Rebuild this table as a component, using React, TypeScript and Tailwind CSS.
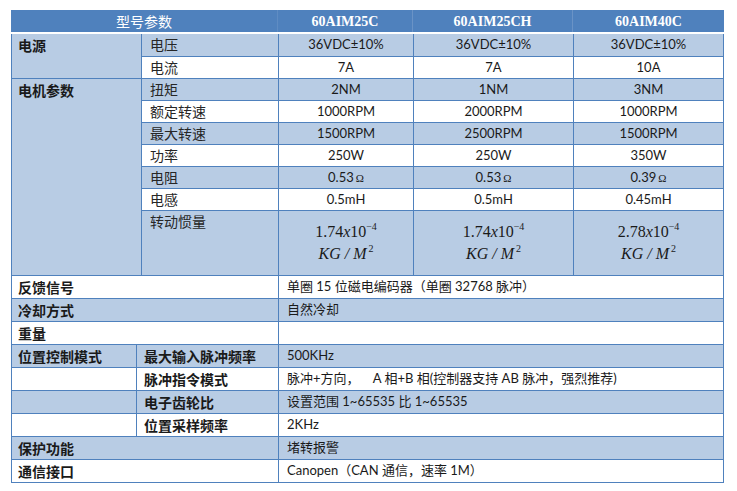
import type { ReactNode } from "react";

const BLUE = "bg-[#b8cce4]";
const WHITE = "bg-white";

type UpperRow = {
  group?: string;
  span?: "row-span-2" | "row-span-7";
  label: string;
  vals?: string[];
  ohm?: string[];
  inertia?: string[];
};

const upper: UpperRow[] = [
  { group: "电源", span: "row-span-2", label: "电压", vals: ["36VDC±10%", "36VDC±10%", "36VDC±10%"] },
  { label: "电流", vals: ["7A", "7A", "10A"] },
  { group: "电机参数", span: "row-span-7", label: "扭矩", vals: ["2NM", "1NM", "3NM"] },
  { label: "额定转速", vals: ["1000RPM", "2000RPM", "1000RPM"] },
  { label: "最大转速", vals: ["1500RPM", "2500RPM", "1500RPM"] },
  { label: "功率", vals: ["250W", "250W", "350W"] },
  { label: "电阻", ohm: ["0.53", "0.53", "0.39"] },
  { label: "电感", vals: ["0.5mH", "0.5mH", "0.45mH"] },
  { label: "转动惯量", inertia: ["1.74", "1.74", "2.78"] },
];

type LowerRow = { label: string; sub?: string; value: string };

const lower: LowerRow[] = [
  { label: "反馈信号", value: "单圈 15 位磁电编码器（单圈 32768 脉冲）" },
  { label: "冷却方式", value: "自然冷却" },
  { label: "重量", value: "" },
  { label: "位置控制模式", sub: "最大输入脉冲频率", value: "500KHz" },
  { label: "", sub: "脉冲指令模式", value: "脉冲+方向，    A 相+B 相(控制器支持 AB 脉冲，强烈推荐)" },
  { label: "", sub: "电子齿轮比", value: "设置范围 1~65535 比 1~65535" },
  { label: "", sub: "位置采样频率", value: "2KHz" },
  { label: "保护功能", value: "堵转报警" },
  { label: "通信接口", value: "Canopen（CAN 通信，速率 1M）" },
];

function Inertia({ n }: { n: string }) {
  return (
    <div className="flex flex-col items-center font-['Liberation_Serif',serif] text-[16px] leading-[22px] text-[#1a1a1a]">
      <span>
        {n}
        <i>x</i>10<sup className="relative -top-[7px] text-[10px] align-baseline">−4</sup>
      </span>
      <span className="italic">
        KG / M<sup className="relative -top-[7px] ml-[2px] text-[10px] not-italic align-baseline">2</sup>
      </span>
    </div>
  );
}

function Value({ children, bg }: { children: ReactNode; bg: string }) {
  return <div className={`flex items-center justify-center ${bg}`}>{children}</div>;
}

export default function App() {
  return (
    <div className="min-h-[491px] bg-white pl-[11px] pt-[10px] font-['Lato','Noto_Sans_CJK_SC',sans-serif] text-[13px] text-[#1a1a1a]">
      <div className="w-[713px]">
        {/* 表头 */}
        <div className="flex h-[22px] bg-[#4f81bd] text-white">
          <div className="flex w-[267px] items-center justify-center border-r border-[#5f8cc3] font-['Noto_Sans_CJK_SC',sans-serif] text-[14px]">
            型号参数
          </div>
          {["60AIM25C", "60AIM25CH", "60AIM40C"].map((m, i) => (
            <div
              key={m}
              className={`flex items-center justify-center font-['Liberation_Serif',serif] text-[14px] font-bold ${
                i === 0 ? "w-[135px] border-r border-[#6a93c6]" : i === 1 ? "w-[160px] border-r border-[#6a93c6]" : "flex-1"
              }`}
            >
              {m}
            </div>
          ))}
        </div>
        <div className="h-[2px] bg-white" />

        <div className="flex flex-col gap-px border border-t-0 border-[#4f81bd] bg-[#4f81bd]">
          {/* 电气/电机参数 */}
          <div className="grid grid-cols-[129px_136px_134px_159px_149px] grid-rows-[22px_21px_21px_21px_21px_21px_21px_21px_64px] gap-px">
            {upper.map((r, i) => {
              const bg = i % 2 === 0 ? BLUE : WHITE;
              return [
                r.group ? (
                  <div
                    key={`g${i}`}
                    className={`${r.span} ${BLUE} pl-[6px] font-['Noto_Sans_CJK_SC',sans-serif] text-[14px] font-bold leading-[22px]`}
                  >
                    {r.group}
                  </div>
                ) : null,
                <div
                  key={`l${i}`}
                  className={`${bg} pl-[8px] font-['Noto_Sans_CJK_SC',sans-serif] text-[14px] leading-[21px] text-[#262626]`}
                >
                  {r.label}
                </div>,
                ...[0, 1, 2].map((c) => (
                  <Value key={`v${i}${c}`} bg={bg}>
                    {r.vals && r.vals[c]}
                    {r.ohm && (
                      <span>
                        {r.ohm[c]}
                        <span className="ml-[2px] font-['Liberation_Serif',serif] text-[11px]">Ω</span>
                      </span>
                    )}
                    {r.inertia && <Inertia n={r.inertia[c]} />}
                  </Value>
                )),
              ];
            })}
          </div>

          {/* 其它参数 */}
          <div className="grid grid-cols-[124px_141px_444px] auto-rows-[22px] gap-px">
            {lower.map((r, i) => {
              const bg = i % 2 === 0 ? WHITE : BLUE;
              return [
                <div
                  key={`a${i}`}
                  className={`${r.sub ? "" : "col-span-2"} ${bg} flex items-center pl-[6px] font-['Noto_Sans_CJK_SC',sans-serif] text-[14px] font-bold`}
                >
                  {r.label}
                </div>,
                r.sub ? (
                  <div
                    key={`b${i}`}
                    className={`${bg} flex items-center pl-[7px] font-['Noto_Sans_CJK_SC',sans-serif] text-[14px] font-bold`}
                  >
                    {r.sub}
                  </div>
                ) : null,
                <div key={`c${i}`} className={`${bg} flex items-center whitespace-pre pl-[8px]`}>
                  {r.value}
                </div>,
              ];
            })}
          </div>
        </div>
      </div>
    </div>
  );
}
